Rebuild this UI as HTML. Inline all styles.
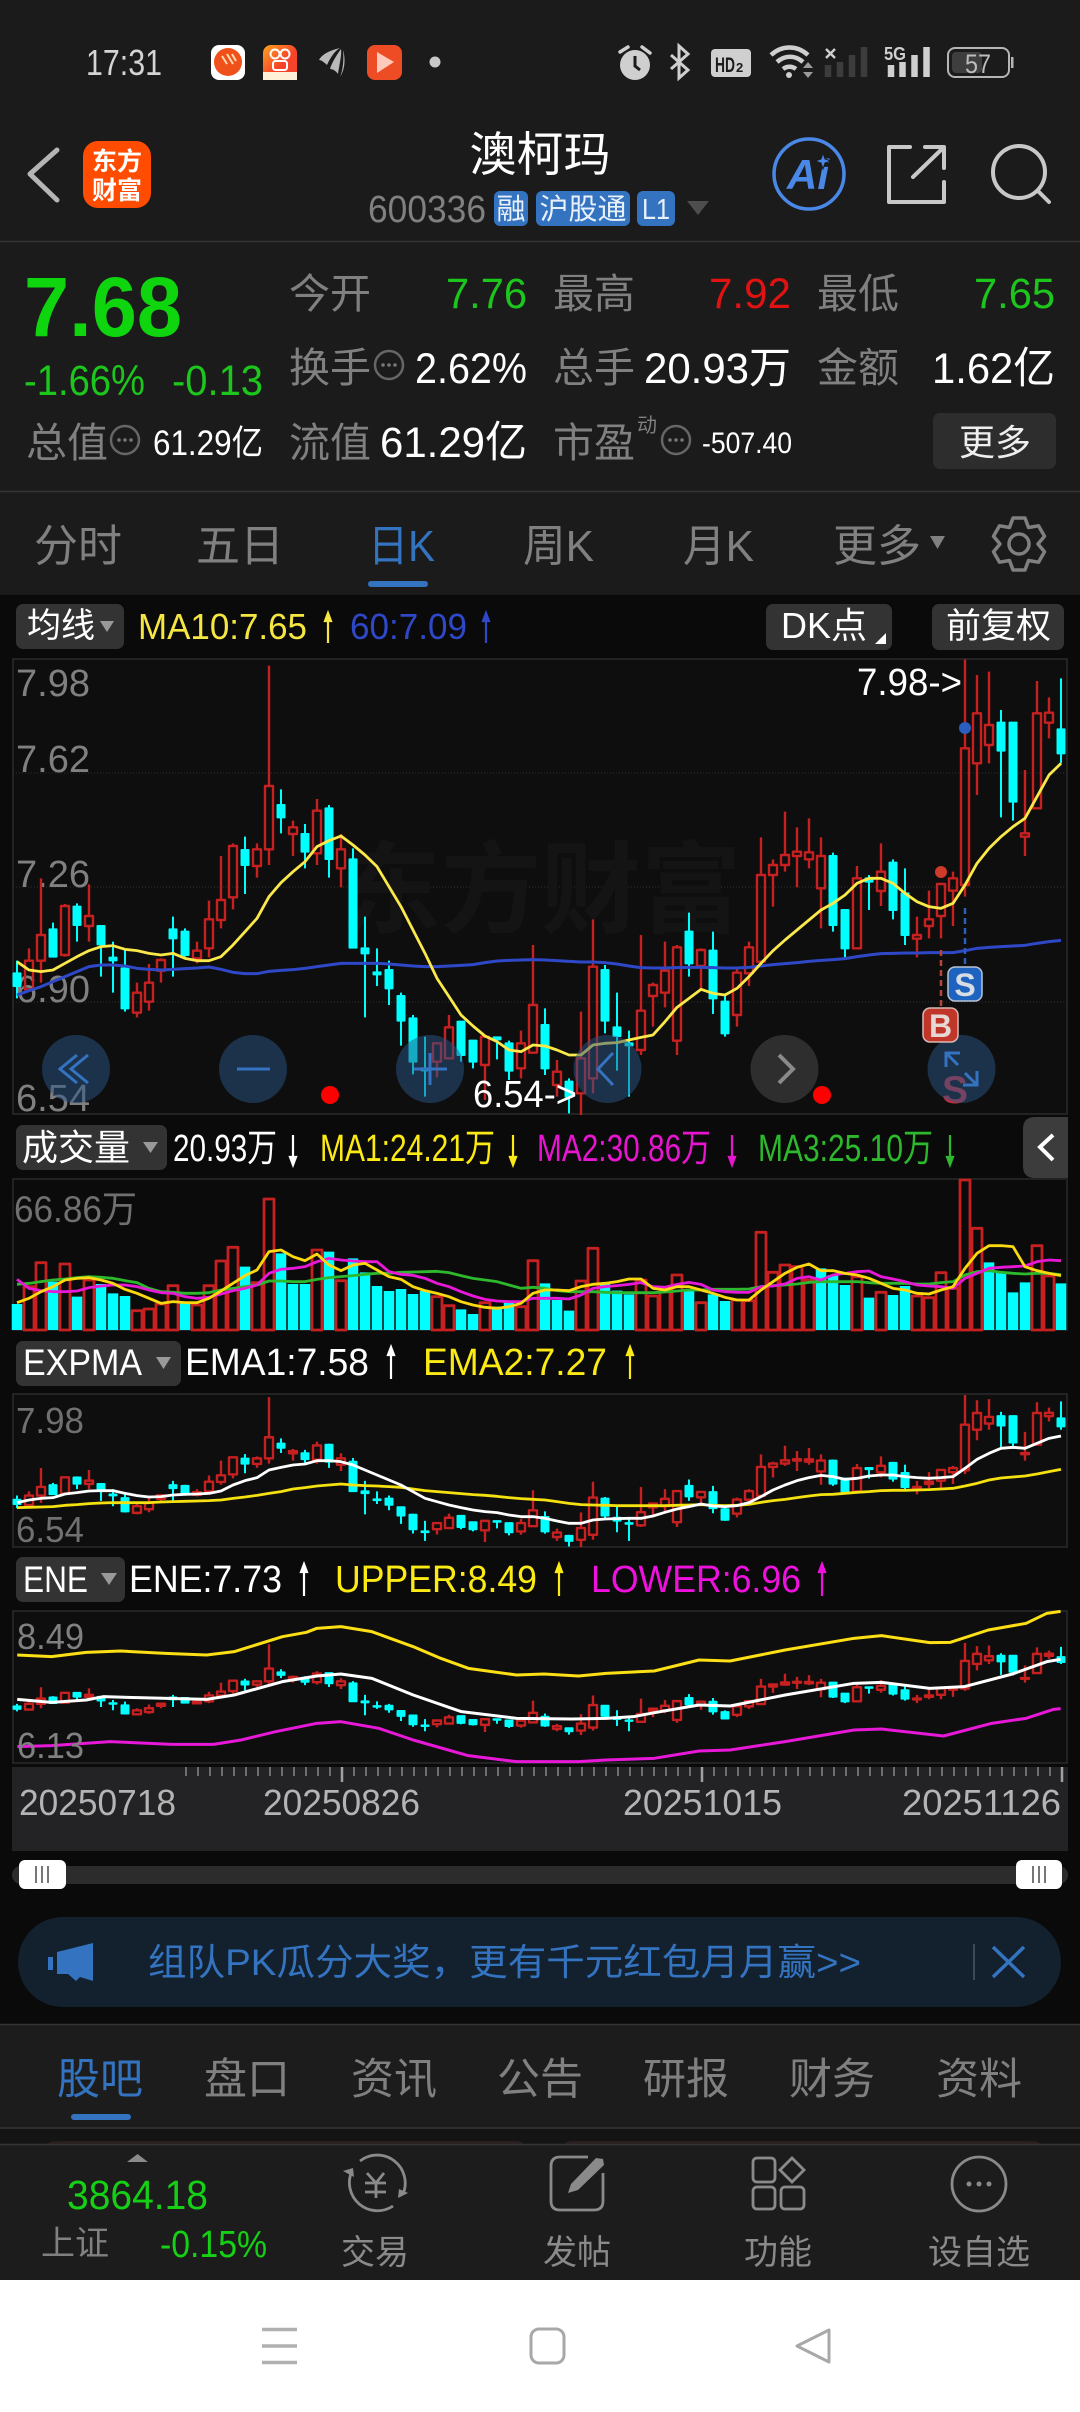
<!DOCTYPE html>
<html lang="zh"><head><meta charset="utf-8"><title>澳柯玛</title>
<style>
html,body{margin:0;padding:0;background:#1b1b1b}
svg{display:block;font-family:"Liberation Sans","Noto Sans CJK SC",sans-serif}
.n{vector-effect:non-scaling-stroke;fill:none;stroke-linejoin:round}
.g{fill:#808080}
.w{fill:#fff}
</style></head><body>
<svg xmlns="http://www.w3.org/2000/svg" width="1080" height="2412" viewBox="0 0 1080 2412">
<defs>
<linearGradient id="og" x1="0" y1="0" x2="1" y2="1"><stop offset="0" stop-color="#ffa51e"/><stop offset=".55" stop-color="#f6442a"/></linearGradient>
<g id="k">
<path class="n" stroke="#c62020" stroke-width="2.4" d="M29 1045V1082M29 1168V1170M25 1082h8V1168h-8zM41 835V1005M41 1082V1148M37 1005h8V1082h-8zM65 912V918M65 1065V1070M61 918h8V1065h-8zM89 853V948M89 978V1025M85 948h8V978h-8zM137 1148V1178M137 1238V1252M133 1178h8V1238h-8zM149 1092V1148M149 1205V1232M145 1148h8V1205h-8zM161 1075V1080M161 1112V1148M157 1080h8V1112h-8zM197 1025V1052M197 1075V1090M193 1052h8V1075h-8zM209 902V958M209 1045V1072M205 958h8V1045h-8zM221 768V900M221 960V985M217 900h8V960h-8zM233 730V738M233 892V928M229 738h8V892h-8zM257 730V748M257 798V833M253 748h8V798h-8zM269 197V558M269 748V795M265 558h8V748h-8zM293 662V682M293 702V768M289 682h8V702h-8zM317 597V632M317 760V795M313 632h8V760h-8zM341 702V748M341 805V862M337 748h8V805h-8zM437 1328V1330M437 1385V1432M433 1330h8V1385h-8zM449 1245V1282M445 1282h8V1375h-8zM485 1395V1500M481 1310h8V1395h-8zM521 1292V1330M521 1405V1435M517 1330h8V1405h-8zM533 1035V1215M529 1215h8V1358h-8zM557 1380V1415M557 1455V1490M553 1415h8V1455h-8zM581 1235V1375M581 1480V1545M577 1375h8V1480h-8zM593 958V1100M593 1435V1480M589 1100h8V1435h-8zM641 1005V1232M641 1350V1365M637 1232h8V1350h-8zM653 1148V1155M653 1188V1280M649 1155h8V1188h-8zM665 1025V1112M665 1178V1222M661 1112h8V1178h-8zM677 1035V1042M677 1322V1365M673 1042h8V1322h-8zM701 1045V1050M701 1098V1170M697 1050h8V1098h-8zM737 1100V1118M737 1245V1280M733 1118h8V1245h-8zM749 1025V1042M749 1120V1158M745 1042h8V1120h-8zM761 712V825M761 1085V1100M757 825h8V1085h-8zM773 778V795M773 825V920M769 795h8V825h-8zM785 635V765M785 795V815M781 765h8V795h-8zM797 682V755M797 768V862M793 755h8V768h-8zM809 655V757M809 778V805M805 757h8V778h-8zM821 712V768M821 865V985M817 768h8V865h-8zM857 798V835M853 835h8V1045h-8zM881 730V815M881 873V918M877 815h8V873h-8zM917 950V1005M917 1016V1072M913 1005h8V1016h-8zM929 872V958M929 978V1015M925 958h8V978h-8zM941 850V852M941 948V1015M937 852h8V948h-8zM953 815V835M953 872V978M949 835h8V872h-8zM965 178V445M965 855V890M961 445h8V855h-8zM977 225V340M977 490V585M973 340h8V490h-8zM989 215V375M989 435V490M985 375h8V435h-8zM1025 510V700M1025 710V768M1021 700h8V710h-8zM1037 243V340M1033 340h8V625h-8zM1049 292V338M1049 368V415M1045 338h8V368h-8z"/>
<path class="n" style="fill:#0ff" stroke="#0ff" stroke-width="2" d="M17 1082V1195M13.5 1120h7V1158h-7zM53 968V1070M49.5 988h7V1070h-7zM77 910V1025M73.5 920h7V975h-7zM101 975V1130M97.5 978h7V1033h-7zM113 1025V1178M109.5 1073h7V1081h-7zM125 1050V1235M121.5 1105h7V1225h-7zM173 950V1130M169.5 988h7V1015h-7zM185 985V1070M181.5 995h7V1065h-7zM245 710V882M241.5 750h7V795h-7zM281 568V700M277.5 615h7V652h-7zM305 672V805M301.5 702h7V755h-7zM329 615V833M325.5 625h7V777h-7zM353 745V1043M349.5 778h7V1043h-7zM365 950V1252M361.5 1045h7V1060h-7zM377 1045V1158M373.5 1117h7V1123h-7zM389 1082V1215M385.5 1110h7V1165h-7zM401 1178V1337M397.5 1188h7V1262h-7zM413 1245V1423M409.5 1255h7V1385h-7zM425 1310V1490M421.5 1405h7V1411h-7zM461 1262V1385M457.5 1265h7V1365h-7zM473 1320V1405M469.5 1322h7V1385h-7zM497 1310V1378M493.5 1312h7V1318h-7zM509 1322V1440M505.5 1330h7V1412h-7zM545 1225V1425M541.5 1275h7V1405h-7zM569 1435V1540M565.5 1445h7V1490h-7zM605 1095V1300M601.5 1110h7V1262h-7zM617 1178V1412M613.5 1282h7V1308h-7zM629 1292V1490M625.5 1330h7V1336h-7zM689 938V1130M685.5 995h7V1090h-7zM713 995V1242M709.5 1052h7V1195h-7zM725 1180V1310M721.5 1205h7V1300h-7zM833 758V995M829.5 768h7V975h-7zM845 930V1072M841.5 930h7V1045h-7zM869 825V930M865.5 835h7V845h-7zM893 778V958M889.5 788h7V930h-7zM905 805V1035M901.5 880h7V1005h-7zM1001 330V652M997.5 368h7V452h-7zM1013 368V662M1009.5 368h7V605h-7zM1061 235V490M1057.5 388h7V460h-7z"/>
</g>
</defs>

<rect width="1080" height="2412" fill="#1b1b1b"/>

<!-- status bar -->
<text x="86" y="75" font-size="36" fill="#d4d4d4" textLength="76" lengthAdjust="spacingAndGlyphs">17:31</text>
<rect x="211" y="45" width="34" height="35" rx="8" fill="#fff"/>
<circle cx="228" cy="62" r="14" fill="#f0501a"/><path d="M222 56l5 8M227 54l6 10M232 54l4 7" stroke="#ffd9b0" stroke-width="2" fill="none"/>
<rect x="263" y="45" width="34" height="35" rx="8" fill="url(#og)"/>
<circle cx="275" cy="54" r="4.5" fill="none" stroke="#fff" stroke-width="2"/><circle cx="285" cy="54" r="4.5" fill="none" stroke="#fff" stroke-width="2"/><rect x="273" y="61" width="14" height="9" rx="2.5" fill="none" stroke="#fff" stroke-width="2"/>
<rect x="263" y="72" width="34" height="8" fill="#fff0d8"/>
<path d="M319 60c3-6 12-10 21-12-4 2-9 8-13 17-3-3-6-5-8-5zM341 49c-3 4-9 13-11 20 3 0 6 2 8 5 1-8 4-19 3-25zM343 50c2 6 3 18-3 27 3-7 4-18 3-27z" fill="#b9b9b9"/>
<rect x="367" y="45" width="35" height="35" rx="8" fill="#ee4c25"/><path d="M377 52l17 10-17 11z" fill="#ffcabb"/>
<circle cx="435" cy="62" r="5.5" fill="#c8c8c8"/>

<circle cx="635" cy="65" r="15" fill="#cfcfcf"/><path d="M620 52l8-5M642 47l8 6" stroke="#cfcfcf" stroke-width="3.500" stroke-linecap="round"/><path d="M635 56v10l5 4" stroke="#1b1b1b" stroke-width="3" fill="none"/>
<path d="M671 55l17 15-9 8V46l9 8-17 15" stroke="#cfcfcf" stroke-width="3" fill="none"/>
<rect x="711" y="49" width="40" height="28" rx="4" fill="#cfcfcf"/>
<text x="715" y="72" font-size="21" font-weight="bold" fill="#1b1b1b" textLength="20" lengthAdjust="spacingAndGlyphs">HD</text><text x="736" y="72" font-size="13" font-weight="bold" fill="#1b1b1b">2</text>
<path d="M771 55c11-10 26-10 37 0M777 62c8-7 18-7 26 0M783 69c4-3 9-3 13 0" stroke="#cfcfcf" stroke-width="4.5" fill="none"/><circle cx="789" cy="75" r="3" fill="#cfcfcf"/><path d="M803 68h10l-5-6zM803 72h10l-5 6z" fill="#9a9a9a"/>
<path d="M826 49l9 9M835 49l-9 9" stroke="#cfcfcf" stroke-width="2.4"/>
<path d="M828 65v12M840 62v15M852 55v22M864 47v30" stroke="#3c3c3c" stroke-width="6.5"/>
<text x="884" y="60" font-size="18" font-weight="bold" fill="#cfcfcf" textLength="22" lengthAdjust="spacingAndGlyphs">5G</text>
<path d="M891 65v12M902.500 62v15M914.500 55v22M926.500 47v30" stroke="#cfcfcf" stroke-width="6.500"/>
<rect x="948" y="48" width="61" height="29" rx="7" fill="none" stroke="#b5b5b5" stroke-width="2"/><rect x="952" y="52" width="30" height="21" rx="4" fill="#3e3e3e"/><rect x="1011" y="57" width="2.500" height="11" fill="#b5b5b5"/>
<text x="965" y="73" font-size="27" fill="#bcbcbc" textLength="26" lengthAdjust="spacingAndGlyphs">57</text>

<!-- nav -->
<path d="M57 150L30 174L57 200" stroke="#b5b5b5" stroke-width="5" fill="none" stroke-linecap="round" stroke-linejoin="round"/>
<rect x="83" y="141" width="68" height="67" rx="15" fill="#ff4c00"/>
<text x="92" y="170" font-size="25" font-weight="bold" fill="#fff">东方</text>
<text x="92" y="199" font-size="25" font-weight="bold" fill="#fff">财富</text>
<text x="540" y="171" font-size="47" fill="#fff" text-anchor="middle">澳柯玛</text>
<text x="368" y="222" font-size="38" fill="#808080" textLength="118" lengthAdjust="spacingAndGlyphs">600336</text>
<rect x="494" y="191" width="34" height="35" rx="6" fill="#3373c0"/><text x="511" y="219" font-size="29" fill="#e8f0fa" text-anchor="middle">融</text>
<rect x="536" y="191" width="94" height="35" rx="6" fill="#3373c0"/><text x="583" y="219" font-size="29" fill="#e8f0fa" text-anchor="middle">沪股通</text>
<rect x="637" y="191" width="38" height="35" rx="6" fill="#3373c0"/><text x="656" y="219" font-size="29" fill="#e8f0fa" text-anchor="middle" textLength="28" lengthAdjust="spacingAndGlyphs">L1</text>
<path d="M687 201h22l-11 14z" fill="#4e4e4e"/>
<circle cx="809" cy="174" r="35" fill="none" stroke="#4a88e8" stroke-width="3.500"/>
<text x="787" y="189" font-size="42" font-weight="bold" font-style="italic" fill="#4a88e8">Ai</text>
<path d="M823 153l2 6 6 2-6 2-2 6-2-6-6-2 6-2z" fill="#4a88e8" stroke="#1b1b1b" stroke-width="1"/>
<path d="M910 147H889V202H944V182M925 147H944V168M913 177L943 148" stroke="#c8c8c8" stroke-width="4" fill="none" stroke-linecap="round" stroke-linejoin="round"/>
<circle cx="1019" cy="172" r="26" fill="none" stroke="#c8c8c8" stroke-width="4"/><path d="M1038 191L1049 202" stroke="#c8c8c8" stroke-width="4" stroke-linecap="round"/>
<path d="M0 241.500H1080" stroke="#353535" stroke-width="1.500"/>

<!-- quote -->
<text x="24" y="336" font-size="84" font-weight="bold" fill="#0fd50f" textLength="158" lengthAdjust="spacingAndGlyphs">7.68</text>
<text x="24" y="395" font-size="43" fill="#1dc61d" textLength="121" lengthAdjust="spacingAndGlyphs">-1.66%</text>
<text x="172" y="395" font-size="43" fill="#1dc61d" textLength="91" lengthAdjust="spacingAndGlyphs">-0.13</text>
<g font-size="41" class="g">
<text x="289" y="308">今开</text><text x="553" y="308">最高</text><text x="817" y="308">最低</text>
<text x="289" y="382">换手</text><text x="553" y="382">总手</text><text x="817" y="382">金额</text>
<text x="26" y="457">总值</text><text x="289" y="457">流值</text><text x="553" y="457">市盈</text>
</g>
<text x="637" y="432" font-size="20" fill="#808080">动</text>
<g font-size="43">
<text x="446" y="308" fill="#1dc61d" textLength="81" lengthAdjust="spacingAndGlyphs">7.76</text>
<text x="709" y="308" fill="#e01212" textLength="82" lengthAdjust="spacingAndGlyphs">7.92</text>
<text x="974" y="308" fill="#1dc61d" textLength="81" lengthAdjust="spacingAndGlyphs">7.65</text>
<text x="415" y="383" fill="#fff" textLength="112" lengthAdjust="spacingAndGlyphs">2.62%</text>
<text x="644" y="383" fill="#fff" textLength="147" lengthAdjust="spacingAndGlyphs">20.93万</text>
<text x="932" y="383" fill="#fff" textLength="123" lengthAdjust="spacingAndGlyphs">1.62亿</text>
<text x="380" y="457" fill="#fff" textLength="147" lengthAdjust="spacingAndGlyphs">61.29亿</text>
</g>
<text x="153" y="455" font-size="35" fill="#fff" textLength="110" lengthAdjust="spacingAndGlyphs">61.29亿</text>
<text x="702" y="453" font-size="30" fill="#fff" textLength="90" lengthAdjust="spacingAndGlyphs">-507.40</text>
<g fill="none" stroke="#666" stroke-width="2.500"><circle cx="389" cy="365" r="14"/><circle cx="125" cy="440" r="14"/><circle cx="676" cy="440" r="14"/></g>
<g fill="#777"><circle cx="383" cy="365" r="1.800"/><circle cx="389" cy="365" r="1.800"/><circle cx="395" cy="365" r="1.800"/><circle cx="119" cy="440" r="1.800"/><circle cx="125" cy="440" r="1.800"/><circle cx="131" cy="440" r="1.800"/><circle cx="670" cy="440" r="1.800"/><circle cx="676" cy="440" r="1.800"/><circle cx="682" cy="440" r="1.800"/></g>
<rect x="933" y="413" width="123" height="56" rx="7" fill="#2d2d2d"/>
<text x="995" y="455" font-size="36" fill="#eee" text-anchor="middle">更多</text>
<path d="M0 491.500H1080" stroke="#353535" stroke-width="1.500"/>

<!-- tabs -->
<g font-size="44" class="g">
<text x="34" y="561">分时</text><text x="196" y="561">五日</text>
<text x="523" y="561" textLength="71" lengthAdjust="spacingAndGlyphs">周K</text>
<text x="683" y="561" textLength="71" lengthAdjust="spacingAndGlyphs">月K</text>
<text x="833" y="561">更多</text>
</g>
<text x="368" y="561" font-size="44" fill="#3373c0" textLength="67" lengthAdjust="spacingAndGlyphs">日K</text>
<path d="M930 536h15l-7.500 13z" fill="#808080"/>
<rect x="368" y="581" width="60" height="6" rx="3" fill="#3373c0"/>
<g transform="translate(1019,544)" fill="none" stroke="#808080" stroke-width="3.500" stroke-linejoin="round"><polygon points="-6,-26 6,-26 9.500,-16.500 19.500,-18.200 25.500,-7.800 19,0 25.500,7.800 19.500,18.200 9.500,16.500 6,26 -6,26 -9.500,16.500 -19.500,18.200 -25.500,7.800 -19,0 -25.500,-7.800 -19.500,-18.200 -9.500,-16.500"/><circle r="10"/></g>

<!-- chart region background -->
<rect x="0" y="595" width="1080" height="1429" fill="#0a0a0a"/>

<!-- row 1 -->
<rect x="16" y="604" width="108" height="45" rx="7" fill="#333"/>
<text x="27" y="637" font-size="34" fill="#fff">均线</text>
<path d="M100 621h14l-7 11z" fill="#999"/>
<text x="138" y="639" font-size="36" fill="#f5e642" textLength="169" lengthAdjust="spacingAndGlyphs">MA10:7.65</text>
<path d="M328 643V615M328 613l-3 8h6z" stroke="#f5e642" stroke-width="2.200" fill="#f5e642"/>
<text x="350" y="639" font-size="36" fill="#2f48c8" textLength="117" lengthAdjust="spacingAndGlyphs">60:7.09</text>
<path d="M486 643V615M486 613l-3 8h6z" stroke="#2f48c8" stroke-width="2.200" fill="#2f48c8"/>
<rect x="766" y="604" width="126" height="46" rx="7" fill="#333"/>
<text x="781" y="638" font-size="36" fill="#fff">DK点</text>
<path d="M886 633v11h-11z" fill="#fff"/>
<rect x="932" y="604" width="132" height="46" rx="7" fill="#333"/>
<text x="946" y="638" font-size="35" fill="#fff">前复权</text>

<!-- main chart -->
<rect x="13" y="659" width="1054" height="455" fill="#0e0e0e" stroke="#2a2a2a" stroke-width="1.500"/>
<path d="M13 773H1067M13 887H1067M13 1002H1067" stroke="#303030" stroke-width="1" stroke-dasharray="1 2"/>
<text x="341" y="925" font-size="100" font-weight="bold" fill="#141414">东方财富</text>
<g font-size="38" fill="#808080">
<text x="16" y="696" textLength="74" lengthAdjust="spacingAndGlyphs">7.98</text>
<text x="16" y="772" textLength="74" lengthAdjust="spacingAndGlyphs">7.62</text>
<text x="16" y="887" textLength="74" lengthAdjust="spacingAndGlyphs">7.26</text>
<text x="16" y="1002" textLength="74" lengthAdjust="spacingAndGlyphs">6.90</text>
<text x="16" y="1111" textLength="74" lengthAdjust="spacingAndGlyphs">6.54</text>
</g>
<use href="#k" transform="matrix(1 0 0 .33333 0 600)"/>
<g transform="matrix(1 0 0 .33333 0 600)">
<polyline class="n" stroke="#2f48c8" stroke-width="3" points="17,1185 29,1172 41,1160 53,1145 65,1130 77,1115 89,1100 101,1095 113,1095 125,1098 137,1105 149,1108 161,1110 173,1108 185,1106 197,1104 209,1101 221,1108 233,1117 245,1121 257,1121 269,1114 281,1111 293,1109 305,1105 317,1100 329,1095 341,1090 353,1090 365,1090 377,1090 389,1092 401,1095 413,1098 425,1100 437,1100 449,1098 461,1096 473,1094 485,1088 497,1083 509,1081 521,1080 533,1079 545,1080 557,1082 569,1084 581,1086 593,1086 605,1088 617,1092 629,1098 641,1103 653,1104 665,1104 677,1103 689,1102 701,1102 713,1103 725,1104 737,1104 749,1102 761,1098 773,1094 785,1091 797,1088 809,1084 821,1081 833,1079 845,1076 857,1070 869,1065 881,1061 893,1060 905,1059 917,1059 929,1058 941,1058 953,1058 965,1052 977,1045 989,1042 1001,1040 1013,1038 1025,1036 1037,1030 1049,1025 1061,1021"/>
<polyline class="n" stroke="#fbe94a" stroke-width="2.800" points="17,1085 29,1110 41,1115 53,1110 65,1090 77,1070 89,1052 101,1040 113,1037 125,1048 137,1052 149,1060 161,1065 173,1060 185,1075 197,1082 209,1082 221,1070 233,1035 245,995 257,955 269,890 281,848 293,815 305,785 317,740 329,722 341,708 353,735 365,765 377,800 389,860 401,920 413,990 425,1060 437,1135 449,1190 461,1245 473,1278 485,1308 497,1325 509,1350 521,1355 533,1335 545,1338 557,1350 569,1365 581,1365 593,1335 605,1330 617,1328 629,1320 641,1312 653,1305 665,1265 677,1222 689,1195 701,1168 713,1180 725,1185 737,1165 749,1130 761,1090 773,1052 785,1020 797,990 809,960 821,930 833,910 845,885 857,850 869,835 881,835 893,850 905,880 917,905 929,920 941,925 953,910 965,855 977,790 989,745 1001,710 1013,680 1025,655 1037,590 1049,525 1061,490"/>
</g>
<text x="857" y="695" font-size="38" fill="#fff" textLength="105" lengthAdjust="spacingAndGlyphs">7.98-&gt;</text>
<text x="473" y="1107" font-size="38" fill="#fff" textLength="104" lengthAdjust="spacingAndGlyphs">6.54-&gt;</text>
<circle cx="965" cy="728" r="6" fill="#2a5fc0"/><circle cx="941" cy="872" r="6" fill="#d03a2a"/>
<path d="M965 908V965" stroke="#2a5fc0" stroke-width="2.500" stroke-dasharray="6 4"/>
<path d="M941 950V1007" stroke="#b8453a" stroke-width="2.500" stroke-dasharray="6 4"/>
<text x="955" y="1103" font-size="39" font-weight="bold" fill="#c03040" text-anchor="middle">S</text>
<g fill="#2a5385" fill-opacity=".5">
<circle cx="76" cy="1069" r="34"/><circle cx="253" cy="1069" r="34"/><circle cx="430" cy="1069" r="34"/><circle cx="607.500" cy="1069" r="34"/><circle cx="961.500" cy="1069" r="34"/>
</g>
<circle cx="784.500" cy="1069" r="34" fill="#2e2e2e"/>
<path d="M77 1055L60 1069L77 1083M88 1055L71 1069L88 1083" stroke="#3373c0" stroke-width="3" fill="none"/>
<path d="M237 1069H270" stroke="#3373c0" stroke-width="3"/>
<path d="M414 1069H447M430 1053V1085" stroke="#3373c0" stroke-width="3"/>
<path d="M613 1053L598 1069L613 1085" stroke="#3373c0" stroke-width="3" fill="none"/>
<path d="M779 1055L793 1069L779 1083" stroke="#8a8a8a" stroke-width="4" fill="none"/>
<path d="M946 1053L958 1065M965 1073L977 1085M946 1067V1053H960M977 1071V1085H963" stroke="#3373c0" stroke-width="3" fill="none"/>
<circle cx="330" cy="1095" r="9" fill="#f00"/><circle cx="822" cy="1095" r="9" fill="#f00"/>
<rect x="948" y="967" width="34" height="34" rx="7" fill="#1e63c0" stroke="#b8c4d2" stroke-width="1.500"/>
<text x="965" y="996" font-size="32" font-weight="bold" fill="#d8dde4" text-anchor="middle">S</text>
<rect x="923" y="1008" width="35" height="34" rx="7" fill="#c0372a" stroke="#d8b8b4" stroke-width="1.500"/>
<text x="940.500" y="1037" font-size="32" font-weight="bold" fill="#e6d6d4" text-anchor="middle">B</text>

<!-- volume row -->
<rect x="16" y="1125" width="151" height="45" rx="7" fill="#333"/>
<text x="22" y="1160" font-size="36" fill="#fff">成交量</text>
<path d="M143 1142h15l-7.500 11z" fill="#999"/>
<text x="173" y="1161" font-size="38" fill="#fff" textLength="104" lengthAdjust="spacingAndGlyphs">20.93万</text>
<path d="M293 1135V1163M293 1165l-3-8h6z" stroke="#fff" stroke-width="2.200" fill="#fff"/>
<text x="320" y="1161" font-size="38" fill="#fcea14" textLength="175" lengthAdjust="spacingAndGlyphs">MA1:24.21万</text>
<path d="M513 1135V1163M513 1165l-3-8h6z" stroke="#fcea14" stroke-width="2.200" fill="#fcea14"/>
<text x="537" y="1161" font-size="38" fill="#e815d0" textLength="174" lengthAdjust="spacingAndGlyphs">MA2:30.86万</text>
<path d="M732 1135V1163M732 1165l-3-8h6z" stroke="#e815d0" stroke-width="2.200" fill="#e815d0"/>
<text x="758" y="1161" font-size="38" fill="#2db82d" textLength="175" lengthAdjust="spacingAndGlyphs">MA3:25.10万</text>
<path d="M950 1135V1163M950 1165l-3-8h6z" stroke="#2db82d" stroke-width="2.200" fill="#2db82d"/>
<path d="M1068 1117H1035Q1023 1117 1023 1129V1166Q1023 1178 1035 1178H1068Z" fill="#3c3c3c"/>
<path d="M1053 1135L1040 1147L1053 1160" stroke="#fff" stroke-width="4" fill="none"/>

<rect x="13" y="1179" width="1054" height="151" fill="#0b0b0b" stroke="#2a2a2a" stroke-width="1.500"/>
<text x="14" y="1222" font-size="37" fill="#707070" textLength="123" lengthAdjust="spacingAndGlyphs">66.86万</text>
<g transform="matrix(1 0 0 .33333 0 1110)">
<path class="n" stroke="#0ff" stroke-width="10.500" d="M17 582V660M53 515V660M77 560V660M101 522V660M113 550V660M125 558V660M185 580V660M245 470V660M281 430V660M293 522V660M305 522V660M329 425V660M353 445V660M365 487V660M377 528V660M389 543V660M401 537V660M413 552V660M425 543V660M461 598V660M473 612V660M497 590V660M509 575V660M545 520V660M557 570V660M569 602V660M605 518V660M617 542V660M629 553V660M689 540V660M713 553V660M725 573V660M821 475V660M833 495V660M845 525V660M869 563V660M893 555V660M905 528V660M989 457V660M1001 485V660M1013 547V660M1025 517V660M1061 520V660"/>
<path class="n" stroke="#c62020" stroke-width="2.800" d="M24 660V530H34V660ZM36 660V458H46V660ZM60 660V462H70V660ZM84 660V510H94V660ZM132 660V602H142V660ZM144 660V597H154V660ZM156 660V582H166V660ZM168 660V527H178V660ZM192 660V585H202V660ZM204 660V527H214V660ZM216 660V453H226V660ZM228 660V412H238V660ZM252 660V518H262V660ZM264 660V267H274V660ZM312 660V420H322V660ZM336 660V512H346V660ZM432 660V560H442V660ZM444 660V587H454V660ZM480 660V578H490V660ZM516 660V590H526V660ZM528 660V452H538V660ZM576 660V513H586V660ZM588 660V415H598V660ZM636 660V510H646V660ZM648 660V558H658V660ZM660 660V540H670V660ZM672 660V495H682V660ZM696 660V578H706V660ZM732 660V570H742V660ZM744 660V572H754V660ZM756 660V367H766V660ZM768 660V487H778V660ZM780 660V465H790V660ZM792 660V470H802V660ZM804 660V510H814V660ZM852 660V500H862V660ZM876 660V547H886V660ZM912 660V558H922V660ZM924 660V563H934V660ZM936 660V488H946V660ZM948 660V535H958V660ZM960 660V210H970V660ZM972 660V355H982V660ZM1032 660V407H1042V660ZM1044 660V498H1054V660Z"/>
<polyline class="n" stroke="#2db82d" stroke-width="2.800" points="17,523 29,520 41,515 53,510 65,507 77,503 89,500 101,502 113,505 125,512 137,518 149,535 161,545 173,547 185,550 197,550 209,548 221,540 233,535 245,530 257,525 269,513 281,513 293,515 305,515 317,508 329,503 341,500 353,497 365,493 377,490 389,490 401,487 413,486 425,485 437,484 449,488 461,497 473,505 485,510 497,515 509,525 521,535 533,532 545,535 557,542 569,545 581,545 593,545 605,547 617,548 629,548 641,548 653,548 665,546 677,543 689,540 701,540 713,538 725,538 737,538 749,537 761,530 773,527 785,525 797,522 809,517 821,515 833,515 845,515 857,515 869,518 881,520 893,520 905,520 917,522 929,522 941,518 953,515 965,495 977,485 989,482 1001,487 1013,490 1025,492 1037,490 1049,490 1061,494"/>
<polyline class="n" stroke="#e818d8" stroke-width="2.800" points="17,508 29,535 41,542 53,545 65,545 77,543 89,533 101,528 113,525 125,525 137,530 149,540 161,548 173,550 185,560 197,565 209,562 221,552 233,542 245,535 257,525 269,490 281,478 293,475 305,470 317,455 329,445 341,450 353,453 365,455 377,455 389,485 401,493 413,496 425,505 437,520 449,530 461,545 473,558 485,568 497,573 509,575 521,575 533,565 545,565 557,565 569,567 581,555 593,535 605,530 617,527 629,523 641,518 653,530 665,532 677,523 689,517 701,523 713,540 725,545 737,547 749,547 761,530 773,528 785,522 797,505 809,500 821,510 833,495 845,490 857,485 869,483 881,500 893,507 905,515 917,525 929,528 941,530 953,535 965,505 977,490 989,475 1001,472 1013,470 1025,468 1037,455 1049,450 1061,452"/>
<polyline class="n" stroke="#fcd90e" stroke-width="2.800" points="17,578 29,565 41,545 53,530 65,510 77,505 89,503 101,510 113,520 125,538 137,550 149,565 161,580 173,575 185,578 197,578 209,565 221,543 233,520 245,497 257,480 269,425 281,420 293,440 305,452 317,432 329,465 341,482 353,465 365,460 377,480 389,500 401,508 413,530 425,542 437,550 449,560 461,575 473,585 485,592 497,595 509,590 521,580 533,550 545,540 557,540 569,542 581,530 593,523 605,520 617,515 629,507 641,507 653,535 665,540 677,530 689,530 701,540 713,550 725,562 737,570 749,570 761,540 773,515 785,490 797,472 809,462 821,482 833,482 845,490 857,495 869,505 881,520 893,535 905,540 917,550 929,552 941,540 953,530 965,475 977,430 989,407 1001,407 1013,410 1025,470 1037,482 1049,490 1061,497"/>
</g>

<!-- EXPMA row -->
<rect x="16" y="1341" width="165" height="45" rx="7" fill="#333"/>
<text x="23" y="1375" font-size="37" fill="#fff" textLength="119" lengthAdjust="spacingAndGlyphs">EXPMA</text>
<path d="M156 1357h15l-7.500 12z" fill="#999"/>
<text x="185" y="1375" font-size="38" fill="#fff" textLength="184" lengthAdjust="spacingAndGlyphs">EMA1:7.58</text>
<path d="M391 1379V1349M391 1347l-3 8h6z" stroke="#fff" stroke-width="2.200" fill="#fff"/>
<text x="423" y="1375" font-size="38" fill="#fcea14" textLength="184" lengthAdjust="spacingAndGlyphs">EMA2:7.27</text>
<path d="M630 1379V1349M630 1347l-3 8h6z" stroke="#fcea14" stroke-width="2.200" fill="#fcea14"/>
<rect x="13" y="1394" width="1054" height="153" fill="#0e0e0e" stroke="#2a2a2a" stroke-width="1.500"/>
<text x="16" y="1433" font-size="36" fill="#707070" textLength="68" lengthAdjust="spacingAndGlyphs">7.98</text>
<text x="16" y="1542" font-size="36" fill="#707070" textLength="68" lengthAdjust="spacingAndGlyphs">6.54</text>
<use href="#k" transform="matrix(1 0 0 .1112 0 1375.200)"/>
<g transform="matrix(1 0 0 .33333 0 1110)">
<polyline class="n" stroke="#f5e010" stroke-width="2.800" points="17,1193 29,1192 41,1191 53,1190 65,1186 77,1184 89,1181 101,1179 113,1178 125,1178 137,1178 149,1178 161,1176 173,1175 185,1174 197,1173 209,1172 221,1170 233,1165 245,1161 257,1156 269,1150 281,1145 293,1137 305,1133 317,1128 329,1125 341,1122 353,1125 365,1127 377,1128 389,1130 401,1132 413,1137 425,1142 437,1145 449,1148 461,1151 473,1154 485,1156 497,1159 509,1163 521,1166 533,1168 545,1170 557,1175 569,1180 581,1184 593,1185 605,1186 617,1187 629,1187 641,1187 653,1187 665,1187 677,1186 689,1185 701,1184 713,1186 725,1187 737,1186 749,1183 761,1177 773,1172 785,1168 797,1163 809,1158 821,1154 833,1153 845,1150 857,1147 869,1145 881,1142 893,1141 905,1141 917,1140 929,1139 941,1137 953,1135 965,1128 977,1120 989,1110 1001,1104 1013,1101 1025,1098 1037,1092 1049,1085 1061,1078"/>
<polyline class="n" stroke="#fff" stroke-width="2.800" points="17,1178 29,1170 41,1165 53,1163 65,1152 77,1148 89,1143 101,1142 113,1142 125,1150 137,1157 149,1161 161,1160 173,1155 185,1153 197,1152 209,1150 221,1143 233,1125 245,1112 257,1103 269,1080 281,1072 293,1065 305,1062 317,1052 329,1052 341,1055 353,1065 365,1080 377,1095 389,1110 401,1125 413,1145 425,1165 437,1175 449,1185 461,1193 473,1200 485,1205 497,1208 509,1215 521,1220 533,1220 545,1225 557,1233 569,1240 581,1240 593,1230 605,1227 617,1226 629,1225 641,1225 653,1218 665,1207 677,1197 689,1190 701,1182 713,1188 725,1190 737,1187 749,1178 761,1160 773,1140 785,1125 797,1112 809,1103 821,1096 833,1100 845,1108 857,1105 869,1098 881,1095 893,1095 905,1100 917,1103 929,1105 941,1103 953,1100 965,1075 977,1048 989,1030 1001,1015 1013,1012 1025,1015 1037,1000 1049,985 1061,978"/>
</g>

<!-- ENE row -->
<rect x="16" y="1557" width="109" height="45" rx="7" fill="#333"/>
<text x="23" y="1592" font-size="37" fill="#fff" textLength="65" lengthAdjust="spacingAndGlyphs">ENE</text>
<path d="M101 1573h16l-8 12z" fill="#999"/>
<text x="129" y="1592" font-size="38" fill="#fff" textLength="153" lengthAdjust="spacingAndGlyphs">ENE:7.73</text>
<path d="M304 1596V1566M304 1564l-3 8h6z" stroke="#fff" stroke-width="2.200" fill="#fff"/>
<text x="335" y="1592" font-size="38" fill="#fcea14" textLength="202" lengthAdjust="spacingAndGlyphs">UPPER:8.49</text>
<path d="M559 1596V1566M559 1564l-3 8h6z" stroke="#fcea14" stroke-width="2.200" fill="#fcea14"/>
<text x="591" y="1592" font-size="38" fill="#ee11dd" textLength="210" lengthAdjust="spacingAndGlyphs">LOWER:6.96</text>
<path d="M822 1596V1566M822 1564l-3 8h6z" stroke="#ee11dd" stroke-width="2.200" fill="#ee11dd"/>
<rect x="13" y="1611" width="1054" height="152" fill="#0e0e0e" stroke="#2a2a2a" stroke-width="1.500"/>
<text x="17" y="1649" font-size="36" fill="#808080" textLength="67" lengthAdjust="spacingAndGlyphs">8.49</text>
<g transform="matrix(.68871 0 0 .33333 0 1570)">
<polyline class="n" stroke="#e818d8" stroke-width="3" points="25,530 75,527 160,515 250,523 310,523 350,510 400,485 460,460 495,455 550,475 600,510 680,557 750,575 840,575 880,570 950,565 1015,543 1060,540 1140,515 1240,480 1280,477 1370,498 1440,460 1490,445 1530,418 1540,416"/>
<polyline class="n" stroke="#fcdf14" stroke-width="3" points="25,255 75,260 125,247 175,243 240,250 300,255 340,245 410,200 445,187 460,175 495,170 540,185 600,230 640,265 680,295 750,315 790,312 840,318 880,310 950,303 1015,270 1060,273 1140,240 1240,205 1280,197 1350,218 1380,217 1435,180 1490,160 1520,130 1540,124"/>
</g>
<text x="17" y="1758" font-size="36" fill="#808080" textLength="67" lengthAdjust="spacingAndGlyphs">6.13</text>
<use href="#k" transform="matrix(1 0 0 .0673 0 1631)"/>
<polyline transform="matrix(.68871 0 0 .33333 0 1570)" class="n" stroke="#fff" stroke-width="3" points="25,388 75,397 125,390 150,380 200,383 300,388 340,375 410,335 460,318 495,312 540,325 600,375 670,425 750,445 830,447 880,445 920,440 950,428 1015,405 1060,408 1140,375 1240,340 1280,337 1350,355 1400,350 1470,312 1520,275 1540,268"/>

<!-- dates -->
<rect x="12" y="1767" width="1056" height="84" fill="#232325"/>
<path d="M185 1771.500H1063" stroke="#6e6e6e" stroke-width="9" stroke-dasharray="2 10"/>
<path d="M342 1767V1782M702 1767V1782M1062 1767V1782" stroke="#a0a0a0" stroke-width="2.500"/>
<g font-size="36" fill="#b4b4b4">
<text x="19" y="1815" textLength="157" lengthAdjust="spacingAndGlyphs">20250718</text>
<text x="263" y="1815" textLength="157" lengthAdjust="spacingAndGlyphs">20250826</text>
<text x="623" y="1815" textLength="159" lengthAdjust="spacingAndGlyphs">20251015</text>
<text x="902" y="1815" textLength="159" lengthAdjust="spacingAndGlyphs">20251126</text>
</g>

<!-- scrollbar -->
<rect x="12" y="1866" width="1056" height="18" rx="9" fill="#2c2c2c"/>
<rect x="19" y="1860" width="47" height="29" rx="6" fill="#fff"/>
<rect x="1016" y="1860" width="46" height="29" rx="6" fill="#fff"/>
<path d="M36 1866V1883M42 1866V1883M48 1866V1883M1033 1866V1883M1039 1866V1883M1045 1866V1883" stroke="#777" stroke-width="2"/>

<!-- banner -->
<rect x="18" y="1917" width="1043" height="90" rx="45" fill="#13202e"/>
<path d="M48 1957h5v13h-5zM57 1952L93 1943V1981L80 1977L76 1981L68 1974H57Z" fill="#3373c0"/>
<text x="148" y="1975" font-size="37" fill="#3373c0" textLength="713" lengthAdjust="spacingAndGlyphs">组队PK瓜分大奖，更有千元红包月月赢&gt;&gt;</text>
<path d="M974 1944V1980" stroke="#3a4a5a" stroke-width="2"/>
<path d="M993 1947L1024 1977M1024 1947L993 1977" stroke="#3373c0" stroke-width="3.500"/>

<!-- lower tabs -->
<rect x="0" y="2024" width="1080" height="104" fill="#1c1c1c"/>
<path d="M0 2024.500H1080" stroke="#353535" stroke-width="1.500"/>
<text x="57" y="2094" font-size="43" fill="#3373c0">股吧</text>
<g font-size="43" class="g">
<text x="204" y="2094">盘口</text><text x="351" y="2094">资讯</text><text x="497" y="2094">公告</text><text x="643" y="2094">研报</text><text x="789" y="2094">财务</text><text x="936" y="2094">资料</text>
</g>
<rect x="71" y="2114" width="60" height="6" rx="3" fill="#3373c0"/>
<path d="M0 2128H1080" stroke="#353535" stroke-width="1.500"/>
<rect x="0" y="2129" width="1080" height="15" fill="#141414"/>
<path d="M48 2144Q48 2141 60 2141H511Q523 2141 523 2144ZM565 2144Q565 2141 577 2141H1028Q1040 2141 1040 2144Z" fill="#2b2020"/>

<!-- bottom bar -->
<rect x="0" y="2144" width="1080" height="136" fill="#1c1c1c"/>
<path d="M0 2144.500H1080" stroke="#333" stroke-width="1.500"/>
<path d="M127 2162h21l-10.500-8z" fill="#8a8a8a"/>
<text x="67" y="2209" font-size="41" fill="#15d015" textLength="141" lengthAdjust="spacingAndGlyphs">3864.18</text>
<text x="41" y="2255" font-size="34" class="g">上证</text>
<text x="160" y="2257" font-size="38" fill="#15d015" textLength="107" lengthAdjust="spacingAndGlyphs">-0.15%</text>
<g fill="none" stroke="#8a8a8a" stroke-width="2.800">
<path d="M360 2161A28 28 0 0 1 403 2194M352 2171A28 28 0 0 0 393 2206"/>
<path d="M367 2173L376 2183L384 2173M376 2183V2198M365 2183H386M365 2192H386"/>
<path d="M588 2157H560Q551 2157 551 2166V2201Q551 2210 560 2210H594Q603 2210 603 2201V2173"/>
<rect x="753" y="2158" width="22" height="24" rx="4"/><path d="M792 2158L804 2170L792 2182L780 2170Z"/>
<rect x="753" y="2187" width="22" height="22" rx="4"/><rect x="781" y="2187" width="23" height="22" rx="4"/>
<circle cx="979" cy="2184" r="27"/>
</g>
<g fill="#8a8a8a"><path d="M343 2171L353 2168L354 2177ZM408 2193L398 2198L399 2189Z"/><path d="M568 2193L571 2184L596 2158L603 2159L604 2165L578 2190Z"/><circle cx="969" cy="2184" r="2.500"/><circle cx="979" cy="2184" r="2.500"/><circle cx="989" cy="2184" r="2.500"/></g>
<g font-size="34" fill="#8a8a8a" text-anchor="middle">
<text x="375" y="2264">交易</text><text x="577" y="2264">发帖</text><text x="778" y="2264">功能</text><text x="979" y="2264">设自选</text>
</g>

<!-- android nav -->
<rect x="0" y="2280" width="1080" height="132" fill="#fff"/>
<path d="M262 2329.500H297M262 2346H297M262 2362.500H297" stroke="#b0b0b0" stroke-width="3.500"/>
<rect x="531" y="2329" width="33" height="34" rx="8" fill="none" stroke="#a8a8a8" stroke-width="3"/>
<path d="M829 2330V2362L797 2346Z" fill="none" stroke="#a8a8a8" stroke-width="3" stroke-linejoin="round"/>
</svg>
</body></html>
